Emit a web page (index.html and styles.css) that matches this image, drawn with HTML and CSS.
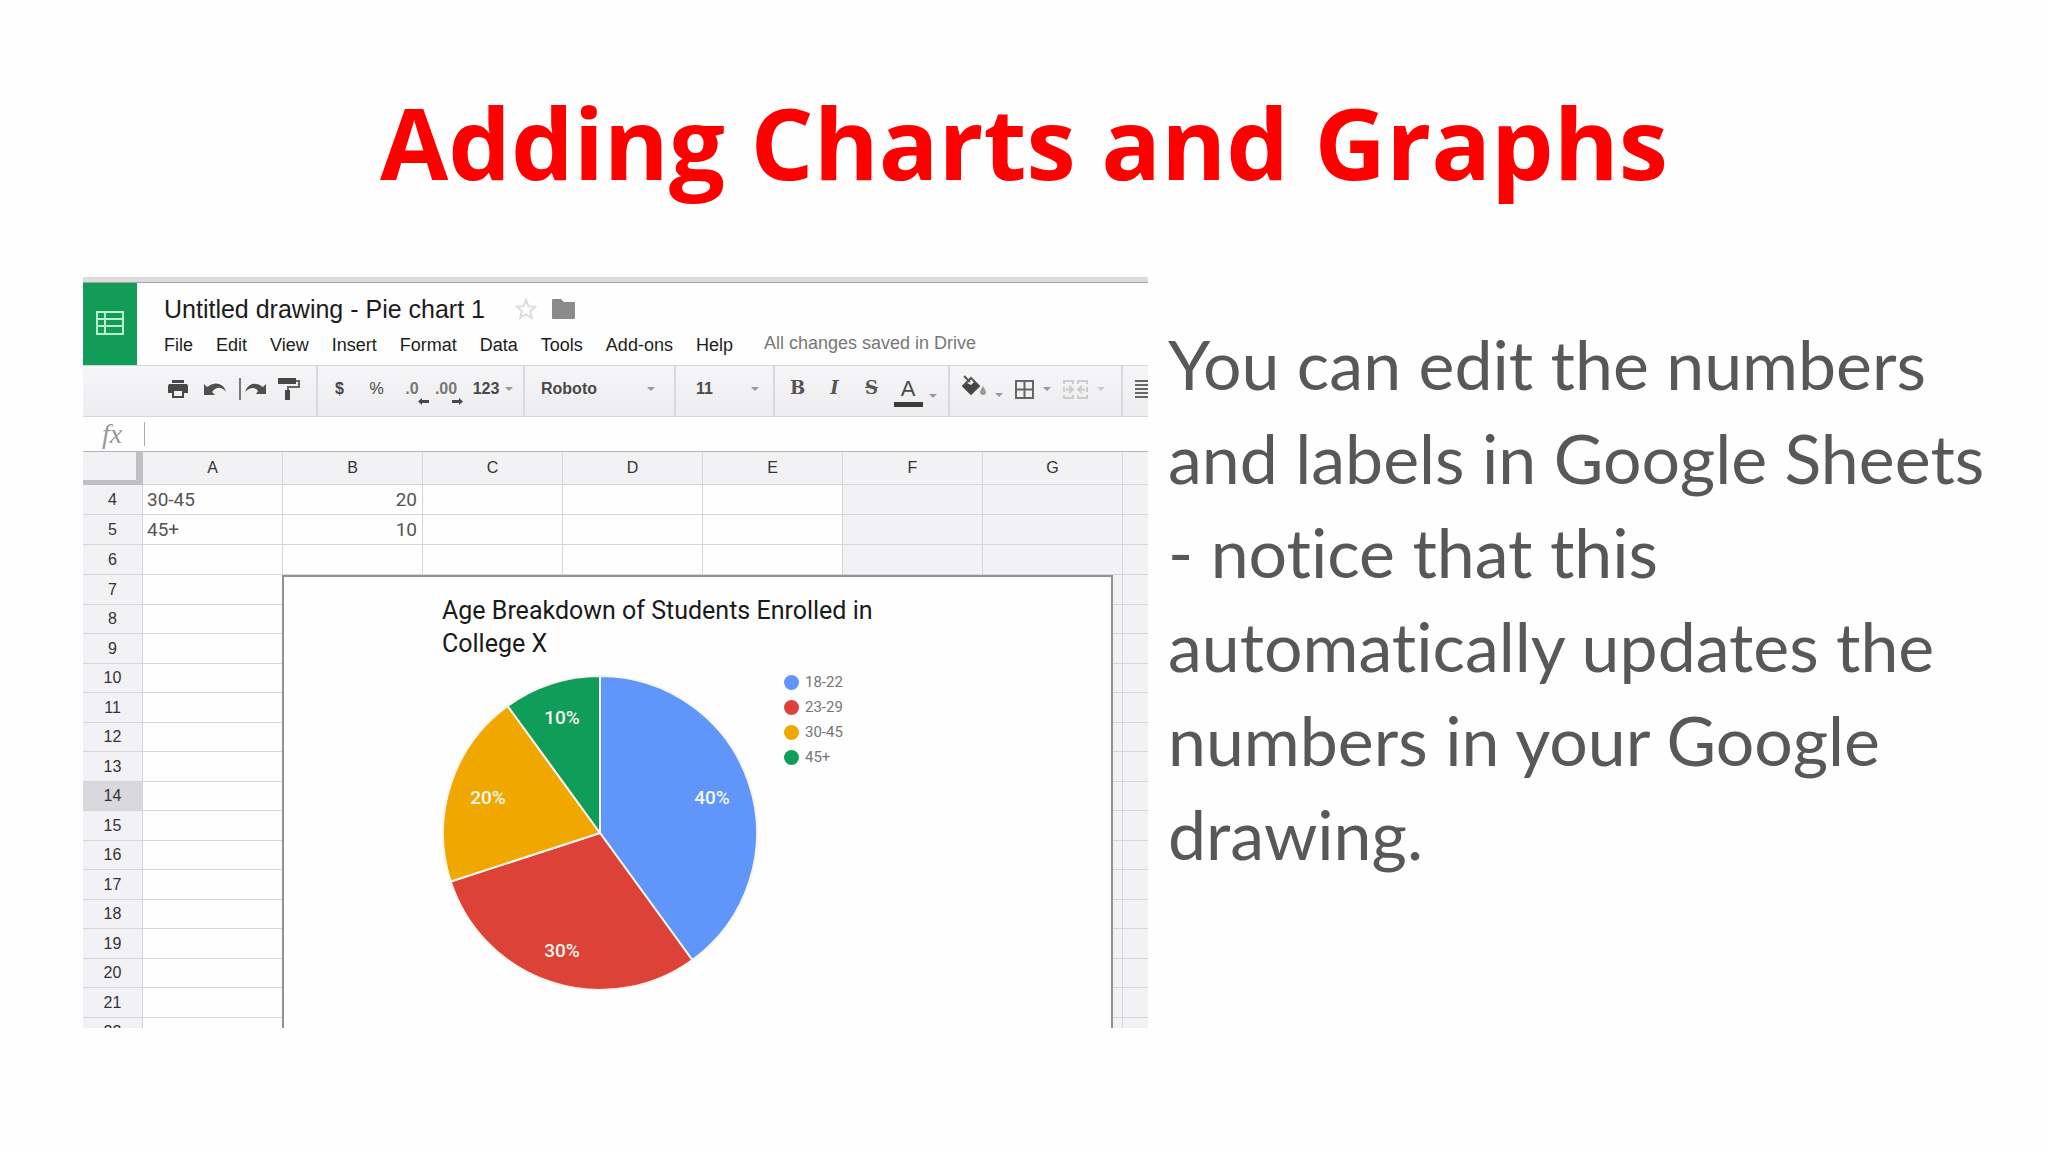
FILE: index.html
```html
<!DOCTYPE html>
<html lang="en">
<head>
<meta charset="utf-8">
<title>Adding Charts and Graphs</title>
<link rel="stylesheet" href="styles.css">
</head>
<body>
<main class="slide">
  <h1 class="slide-title">Adding Charts and Graphs</h1>
  <div class="columns">
    <section class="sheet" aria-label="Spreadsheet">
      <header class="top">
        <div class="logo">
          <svg width="28" height="24" viewBox="0 0 28 24" fill="none" stroke="#b9f0cf" stroke-width="2"><path d="M1 1h26v22H1zM1 8h26M1 15h26M9 1v22"/></svg>
        </div>
        <div class="doc">
          <div class="doc-row">
            <span class="doc-name">Untitled drawing - Pie chart 1</span>
            <svg class="star" width="22" height="22" viewBox="0 0 22 22" fill="none" stroke="#dcdce2" stroke-width="2"><path d="M11 2l2.600 6.300 6.600.5-5 4.400 1.500 6.600L11 16.300l-5.700 3.500 1.500-6.600-5-4.400 6.600-.5z"/></svg>
            <svg width="23" height="20" viewBox="0 0 23 20"><path fill="#8b8b8b" d="M1 0h8l3 3h10q1 0 1 1v15q0 1-1 1H1q-1 0-1-1V1q0-1 1-1z"/></svg>
          </div>
          <nav class="menu">
            <button>File</button><button>Edit</button><button>View</button><button>Insert</button><button>Format</button><button>Data</button><button>Tools</button><button>Add-ons</button><button>Help</button>
            <span class="status">All changes saved in Drive</span>
          </nav>
        </div>
      </header>

      <div class="toolbar">
        <div class="group history">
          <button aria-label="Print"><svg width="20" height="18" viewBox="0 0 20 18"><path fill="#484848" d="M4 0h12v3H4zM2 4h16q2 0 2 2v7h-4v-3H4v3H0V6q0-2 2-2z"/><path fill="none" stroke="#484848" stroke-width="2" d="M5 10h10v7H5z"/></svg></button>
          <button aria-label="Undo"><svg width="22" height="12" viewBox="0 0 22 12"><path fill="#505050" d="M0 1l3 3Q9-1 15 1q5 1 7 8-4-5-9-4Q10 6 8 9l3 3H0z"/></svg></button>
          <button aria-label="Redo"><svg width="28" height="22" viewBox="0 0 28 22"><path fill="#777" d="M1 0h2v22H1z"/><path fill="#505050" d="M28 6l-3 3Q20 5 14 6 9 8 7 14q4-4 8-4 3 0 5 3l-2 3h10z"/></svg></button>
          <button aria-label="Paint format"><svg width="22" height="24" viewBox="0 0 22 24"><path fill="#484848" d="M0 1h18v6H0zM7 13h5v10H7z"/><path fill="none" stroke="#666" stroke-width="2" d="M18 4h3v6H10v3"/></svg></button>
        </div>
        <div class="group numbers">
          <button>$</button>
          <button class="percent">%</button>
          <button class="decimal" aria-label="Decrease decimal places">.0<svg class="move" width="11" height="7" viewBox="0 0 11 7"><path fill="#484848" d="M0 3.500L4 0v2h7v3H4v2z"/></svg></button>
          <button class="decimal" aria-label="Increase decimal places">.00<svg class="move" width="11" height="7" viewBox="0 0 11 7"><path fill="#484848" d="M11 3.500L7 0v2H0v3h7v2z"/></svg></button>
          <button class="more">123<i class="caret"></i></button>
        </div>
        <div class="group font"><button class="picker">Roboto<i class="caret"></i></button></div>
        <div class="group size"><button class="picker">11<i class="caret"></i></button></div>
        <div class="group style">
          <button class="slab">B</button>
          <button class="slab italic">I</button>
          <button class="slab strike">S</button>
          <button class="ink"><span class="ink-letter">A</span><i class="caret"></i></button>
        </div>
        <div class="group cells">
          <button class="fill" aria-label="Fill color"><svg width="24" height="20" viewBox="0 0 24 20"><path fill="none" stroke="#555" stroke-width="2" d="M2 1l6 6M9 3l8 8-8 8-8-8z"/><path fill="#444" d="M1 11l4-3 4 2 3-3 5 4-8 8z"/><path fill="#999" d="M21 11q3 5 3 6a3 3 0 0 1-6 0q0-1 3-6z"/></svg><i class="caret"></i></button>
          <button aria-label="Borders"><svg width="19" height="19" viewBox="0 0 19 19" fill="none" stroke="#666" stroke-width="2"><path d="M1 1h17v17H1zM9.500 1v17M1 9.500h17"/></svg><i class="caret"></i></button>
          <button class="disabled" aria-label="Merge cells" disabled><svg width="25" height="19" viewBox="0 0 25 19" fill="none" stroke="#ccc" stroke-width="2"><path d="M10 4V1H1v3M1 7v5M1 15v3h9v-3M15 4V1h9v3M24 7v5M24 15v3h-9v-3M3 9.500h6M6 6l4 3.500L6 13M22 9.500h-6M19 6l-4 3.500 4 3.500"/></svg><i class="caret"></i></button>
        </div>
        <div class="group align">
          <button aria-label="Align"><svg width="20" height="18" viewBox="0 0 20 18"><path fill="#666" d="M0 0h20v2H0zM0 4h20v2H0zM0 8h20v2H0zM0 12h20v2H0zM0 16h20v2H0z"/></svg></button>
        </div>
      </div>

      <div class="formula"><label class="fx" for="formula">fx</label><input id="formula" class="formula-input" type="text"></div>

      <div class="grid">
        <table class="cells-table">
          <colgroup><col class="col-num"><col class="col"><col class="col"><col class="col"><col class="col"><col class="col"><col class="col"><col class="col"><col></colgroup>
          <thead><tr><th class="corner"></th><th>A</th><th>B</th><th>C</th><th>D</th><th>E</th><th>F</th><th>G</th><th></th></tr></thead>
          <tbody>
            <tr><th>4</th><td>30-45</td><td class="num">20</td><td></td><td></td><td></td><td class="off"></td><td class="off"></td><td class="off"></td></tr>
            <tr><th>5</th><td>45+</td><td class="num">10</td><td></td><td></td><td></td><td class="off"></td><td class="off"></td><td class="off"></td></tr>
            <tr><th>6</th><td></td><td></td><td></td><td></td><td></td><td class="off"></td><td class="off"></td><td class="off"></td></tr>
            <tr><th>7</th><td></td><td></td><td></td><td></td><td></td><td class="off"></td><td class="off"></td><td class="off"></td></tr>
            <tr><th>8</th><td></td><td></td><td></td><td></td><td></td><td class="off"></td><td class="off"></td><td class="off"></td></tr>
            <tr><th>9</th><td></td><td></td><td></td><td></td><td></td><td class="off"></td><td class="off"></td><td class="off"></td></tr>
            <tr><th>10</th><td></td><td></td><td></td><td></td><td></td><td class="off"></td><td class="off"></td><td class="off"></td></tr>
            <tr><th>11</th><td></td><td></td><td></td><td></td><td></td><td class="off"></td><td class="off"></td><td class="off"></td></tr>
            <tr><th>12</th><td></td><td></td><td></td><td></td><td></td><td class="off"></td><td class="off"></td><td class="off"></td></tr>
            <tr><th>13</th><td></td><td></td><td></td><td></td><td></td><td class="off"></td><td class="off"></td><td class="off"></td></tr>
            <tr><th class="current">14</th><td></td><td></td><td></td><td></td><td></td><td class="off"></td><td class="off"></td><td class="off"></td></tr>
            <tr><th>15</th><td></td><td></td><td></td><td></td><td></td><td class="off"></td><td class="off"></td><td class="off"></td></tr>
            <tr><th>16</th><td></td><td></td><td></td><td></td><td></td><td class="off"></td><td class="off"></td><td class="off"></td></tr>
            <tr><th>17</th><td></td><td></td><td></td><td></td><td></td><td class="off"></td><td class="off"></td><td class="off"></td></tr>
            <tr><th>18</th><td></td><td></td><td></td><td></td><td></td><td class="off"></td><td class="off"></td><td class="off"></td></tr>
            <tr><th>19</th><td></td><td></td><td></td><td></td><td></td><td class="off"></td><td class="off"></td><td class="off"></td></tr>
            <tr><th>20</th><td></td><td></td><td></td><td></td><td></td><td class="off"></td><td class="off"></td><td class="off"></td></tr>
            <tr><th>21</th><td></td><td></td><td></td><td></td><td></td><td class="off"></td><td class="off"></td><td class="off"></td></tr>
            <tr><th>22</th><td></td><td></td><td></td><td></td><td></td><td class="off"></td><td class="off"></td><td class="off"></td></tr>
          </tbody>
        </table>

        <figure class="chart">
          <figcaption class="chart-title">Age Breakdown of Students Enrolled in College X</figcaption>
          <div class="chart-body">
            <svg class="pie" width="316" height="316" viewBox="-158 -158 316 316" role="img" aria-label="Pie chart of student ages">
              <g stroke="#f6f4ec" stroke-width="2" stroke-linejoin="round">
                <path fill="#6096fa" d="M0 0V-157A157 157 0 0 1 92.300 127z"/>
                <path fill="#dc4238" d="M0 0L92.300 127A157 157 0 0 1-149.300 48.500z"/>
                <path fill="#f0a800" d="M0 0L-149.300 48.500A157 157 0 0 1-92.300-127z"/>
                <path fill="#109d59" d="M0 0L-92.300-127A157 157 0 0 1 0-157z"/>
              </g>
              <g class="pie-label">
                <text x="112" y="-29">40%</text>
                <text x="-38" y="124">30%</text>
                <text x="-112" y="-29">20%</text>
                <text x="-38" y="-109">10%</text>
              </g>
            </svg>
            <ul class="legend">
              <li><i class="dot blue"></i>18-22</li>
              <li><i class="dot red"></i>23-29</li>
              <li><i class="dot amber"></i>30-45</li>
              <li><i class="dot green"></i>45+</li>
            </ul>
          </div>
        </figure>
      </div>
    </section>

    <p class="note">You can edit the numbers and labels in Google Sheets - notice that this automatically updates the numbers in your Google drawing.</p>
  </div>
</main>
</body>
</html>
```
FILE: styles.css
```css
* { box-sizing: border-box; }
body { margin: 0; background: #fefefe; }
button { border: 0; background: none; padding: 0; font: inherit; color: inherit; white-space: nowrap; }

.slide { padding: 74px 40px 40px 83px; }
.slide-title {
  margin: 0 43px 67px 0;
  font: bold 99px/136px "Open Sans", sans-serif;
  color: #f00;
  text-align: center;
}
.columns {
  display: grid;
  grid-template-columns: minmax(0, 1065fr) minmax(0, 840fr);
  gap: 20px;
  align-items: start;
}
.note {
  margin: 40px 0 0;
  font: 68px/94px Lato, sans-serif;
  font-variant-ligatures: none;
  color: #58585a;
}

/* Spreadsheet window */
.sheet {
  overflow: hidden;
  border-top: 5px solid #dcdcdc;
  background: #fefefe;
  font-family: "Liberation Sans", Arial, sans-serif;
}
.top { display: flex; border-top: 1px solid #a4a4a4; border-bottom: 1px solid #d5d5d5; height: 84px; }
.logo { width: 54px; flex: none; padding-bottom: 2px; background: #129c57; display: flex; align-items: center; justify-content: center; }
.doc { padding: 11px 0 0 27px; white-space: nowrap; }
.doc-row { display: flex; align-items: center; height: 30px; }
.doc-name { font-size: 25px; color: #1c1c1c; }
.star { margin: 0 15px 0 30px; }
.menu { display: flex; align-items: center; gap: 23px; height: 42px; font-size: 18px; color: #1c1c1c; }
.status { margin-left: 8px; padding-bottom: 3px; font-size: 18px; color: #777; }

.toolbar {
  display: flex;
  height: 51px;
  border-bottom: 1px solid #d5d5d5;
  background: linear-gradient(#f6f5f7, #edecee);
  font-size: 16px;
  font-weight: bold;
  color: #484848;
}
.group { display: flex; flex: none; align-items: center; padding-bottom: 4px; border-right: 2px solid #dadadc; }
.group:last-child { border: 0; }
.group button { display: flex; align-items: center; justify-content: center; height: 36px; width: 37px; }
.caret { flex: none; border: 4px solid transparent; border-top-color: #999; border-bottom: 0; }
.history { width: 235px; padding-left: 76px; }
.numbers { width: 207px; padding-left: 3px; }
.numbers .percent { font-weight: normal; }
.group .decimal { position: relative; width: 34px; color: #777; }
.move { position: absolute; right: 0; bottom: 2px; }
.numbers .more { width: 60px; gap: 6px; }
.font { width: 151px; }
.size { width: 99px; }
.group .picker { width: 100%; justify-content: space-between; padding: 0 19px 0 16px; }
.size .picker { padding-left: 20px; padding-right: 14px; }
.style { width: 175px; padding-left: 4px; }
.group .slab { padding-bottom: 4px; font: bold 18px "DejaVu Serif", serif; color: #555; }
.group .italic { font-style: italic; }
.strike { text-decoration: line-through; }
.group .ink { width: 50px; gap: 6px; align-items: flex-end; }
.ink-letter { width: 29px; border-bottom: 5px solid #3c3c3c; font: 22px/26px "Liberation Sans", sans-serif; text-align: center; }
.ink .caret { margin-bottom: 9px; }
.cells { width: 173px; padding-left: 12px; gap: 12px; }
.group.cells button { width: auto; gap: 9px; }
.cells .fill { align-items: flex-end; padding-bottom: 10px; }
.cells .fill svg { margin-bottom: 2px; }
.disabled .caret { border-top-color: #ccc; }
.align { padding-left: 12px; }
.group.align button { justify-content: flex-start; }

.formula { display: flex; align-items: center; height: 34px; padding-left: 19px; }
.fx { width: 42px; font: italic 28px/30px "Liberation Serif", serif; color: #999; }
.formula-input { flex: 1; min-width: 0; height: 24px; border: 0; border-left: 1px solid #aaa; background: none; }

/* Cell grid and the chart that floats over it */
.grid { position: relative; height: 577px; overflow: hidden; }
.cells-table { width: 100%; table-layout: fixed; border-collapse: separate; border-spacing: 0; }
.col-num { width: 60px; }
.col { width: 140px; }
th, td { padding: 0; border: solid #d6d5d8; border-width: 0 1px 1px 0; }
th { background: #f2f1f3; font-size: 16px; font-weight: normal; color: #333; }
th:last-child, td:last-child { border-right: 0; }
td { padding: 0 5px 0 4px; font: 19px Roboto, sans-serif; color: #555; }
thead th { height: 34px; border-top: 1px solid #b4b4b6; }
tbody tr { height: 30px; }
tbody tr:nth-child(2n + 5) { height: 29px; }
.corner { border-right: 7px solid #c0bfc1; border-bottom: 5px solid #c0bfc1; }
.current { background: #d9d9db; }
.num { text-align: right; }
.off { background: #f2f1f3; }

.chart {
  position: absolute;
  top: 124px;
  left: 199px;
  right: 35px;
  bottom: 0;
  margin: 0;
  padding: 17px 160px 0 158px;
  border: 2px solid #929193;
  border-bottom: 0;
  background: #fefefe;
  font-family: Roboto, sans-serif;
}
.chart-title { max-width: 450px; font-size: 25px; line-height: 33px; color: #1a1a1a; }
.chart-body { display: flex; align-items: flex-start; gap: 26px; margin-top: 10px; }
.pie { flex: none; margin-top: 5px; }
.pie-label { font: 500 19px Roboto, sans-serif; fill: #f6f8ee; text-anchor: middle; }
.legend { margin: 0; padding: 0; list-style: none; font-size: 15px; line-height: 25px; color: #757575; }
.legend li { display: flex; align-items: center; gap: 6px; white-space: nowrap; }
.dot { width: 15px; height: 15px; border-radius: 50%; }
.blue { background: #6096fa; }
.red { background: #dc4238; }
.amber { background: #f0a800; }
.green { background: #109d59; }
```
